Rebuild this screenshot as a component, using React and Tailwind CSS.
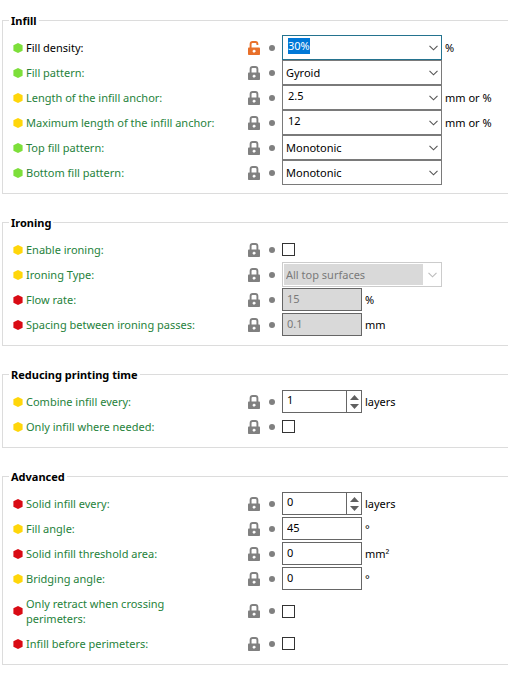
import { useEffect, useId, useRef } from "react";

const LEVEL_COLORS = {
  simple: "#7ddf3a",
  advanced: "#ffd60a",
  expert: "#d90b14",
};

function LevelMark({ level }) {
  return (
    <svg className="h-[10px] w-[10px] shrink-0" viewBox="0 0 10 10" aria-hidden="true">
      <path d="M5 0 L9.6 2.3 V7.7 L5 10 L0.4 7.7 V2.3 Z" fill={LEVEL_COLORS[level]} />
    </svg>
  );
}

function LockIcon({ open }) {
  return (
    <svg className="h-[14px] w-3" viewBox="0 0 12 14" aria-hidden="true">
      <path
        d={open ? "M2.6 7 V3 Q2.6 1 4.6 1 H7.4 Q9.4 1 9.4 3 V4" : "M2.6 7 V3 Q2.6 1 4.6 1 H7.4 Q9.4 1 9.4 3 V7"}
        fill="none"
        stroke={open ? "#e8702a" : "#808080"}
        strokeWidth="1.9"
      />
      <rect y="6.4" width="12" height="7.6" rx="0.8" fill={open ? "#e8702a" : "#808080"} />
      <path d="M4.4 10 L6 8.6 L8 10 L6.6 11.4 H5.2 Z" fill="#fff" />
    </svg>
  );
}

function Chevron({ color = "#555555" }) {
  return (
    <svg className="h-[6px] w-[9px]" viewBox="0 0 9 6" aria-hidden="true">
      <path d="M0.5 0.8 L4.5 4.8 L8.5 0.8" fill="none" stroke={color} strokeWidth="1.1" />
    </svg>
  );
}

function Row({ level, label, active, children }) {
  const id = useId();
  return (
    <div className="flex min-h-[25px] items-center">
      <LevelMark level={level} />
      <label
        htmlFor={id}
        className={`ml-[3px] w-[200px] shrink-0 py-[5px] leading-[15px] ${active ? "text-black" : "text-[#26823b]"}`}
      >
        {label}
      </label>
      <button type="button" aria-label={active ? "Unlocked value" : "Locked value"} className="ml-[22px] shrink-0">
        <LockIcon open={active} />
      </button>
      <button
        type="button"
        aria-label="Revert value"
        className="mr-[7px] ml-[9px] h-[6px] w-[6px] shrink-0 rounded-full bg-[#808080]"
      />
      {children(id)}
    </div>
  );
}

function Unit({ children }) {
  return <span className="ml-[3px] whitespace-nowrap text-black">{children}</span>;
}

function ComboInput({ id, value, focused }) {
  const ref = useRef(null);
  useEffect(() => {
    if (focused) {
      ref.current.focus();
      ref.current.select();
    }
  }, [focused]);
  return (
    <div
      className={`flex h-[25px] w-[160px] shrink-0 items-center border bg-white ${focused ? "border-[#24738f]" : "border-[#7a7a7a]"}`}
    >
      <input
        id={id}
        ref={ref}
        type="text"
        defaultValue={value}
        className="mb-[3px] ml-[5px] h-4 w-0 flex-1 leading-4 outline-none selection:bg-[#0078d7] selection:text-white"
      />
      <button type="button" aria-label="Show options" className="px-[3px]">
        <Chevron />
      </button>
    </div>
  );
}

function Select({ id, value, disabled }) {
  return (
    <div
      className={`grid h-[25px] w-[160px] shrink-0 grid-cols-[1fr_16px] items-center border bg-white ${disabled ? "border-[#cccccc] p-px" : "border-[#7a7a7a]"}`}
    >
      <select
        id={id}
        disabled={disabled}
        className={`col-span-2 col-start-1 row-start-1 h-full appearance-none outline-none ${disabled ? "mr-[17px] bg-[#d9d9d9] pl-[2px] text-[#7a7a7a] opacity-100" : "bg-white pl-[3px] text-black"}`}
      >
        <option>{value}</option>
      </select>
      <span className="pointer-events-none col-start-2 row-start-1 pl-1">
        <Chevron color={disabled ? "#bbbbbb" : "#555555"} />
      </span>
    </div>
  );
}

function TextField({ id, value, disabled }) {
  return (
    <input
      id={id}
      type="text"
      defaultValue={value}
      disabled={disabled}
      className={`h-[23px] w-[80px] shrink-0 border border-[#666666] pb-[3px] pl-1 outline-none ${disabled ? "bg-[#d9d9d9] text-[#7a7a7a]" : "bg-white text-black"}`}
    />
  );
}

function SpinField({ id, value }) {
  return (
    <div className="flex h-[23px] w-[80px] shrink-0 border border-[#666666] bg-white">
      <input id={id} type="text" inputMode="numeric" defaultValue={value} className="w-0 flex-1 pb-[3px] pl-1 outline-none" />
      <div className="flex w-[15px] flex-col items-center justify-center gap-1 border-l border-[#666666]">
        <button type="button" aria-label="Increase">
          <svg className="h-[5px] w-[9px]" viewBox="0 0 9 5" aria-hidden="true">
            <path d="M0 5 L4.5 0 L9 5 Z" fill="#606060" />
          </svg>
        </button>
        <button type="button" aria-label="Decrease">
          <svg className="h-[5px] w-[9px]" viewBox="0 0 9 5" aria-hidden="true">
            <path d="M0 0 L4.5 5 L9 0 Z" fill="#606060" />
          </svg>
        </button>
      </div>
    </div>
  );
}

function CheckField({ id }) {
  return <input id={id} type="checkbox" className="h-[13px] w-[13px] shrink-0 appearance-none border border-[#333333] bg-white checked:bg-[#333333]" />;
}

function Field({ id, row }) {
  switch (row.type) {
    case "combo":
      return <ComboInput id={id} value={row.value} focused={row.active} />;
    case "select":
      return <Select id={id} value={row.value} disabled={row.disabled} />;
    case "spin":
      return <SpinField id={id} value={row.value} />;
    case "check":
      return <CheckField id={id} />;
    default:
      return <TextField id={id} value={row.value} disabled={row.disabled} />;
  }
}

const GROUPS = [
  {
    title: "Infill",
    rows: [
      { level: "simple", label: "Fill density:", type: "combo", value: "30%", unit: "%", active: true },
      { level: "simple", label: "Fill pattern:", type: "select", value: "Gyroid" },
      { level: "advanced", label: "Length of the infill anchor:", type: "combo", value: "2.5", unit: "mm or %" },
      { level: "advanced", label: "Maximum length of the infill anchor:", type: "combo", value: "12", unit: "mm or %" },
      { level: "simple", label: "Top fill pattern:", type: "select", value: "Monotonic" },
      { level: "simple", label: "Bottom fill pattern:", type: "select", value: "Monotonic" },
    ],
  },
  {
    title: "Ironing",
    rows: [
      { level: "advanced", label: "Enable ironing:", type: "check" },
      { level: "advanced", label: "Ironing Type:", type: "select", value: "All top surfaces", disabled: true },
      { level: "expert", label: "Flow rate:", type: "text", value: "15", unit: "%", disabled: true },
      { level: "expert", label: "Spacing between ironing passes:", type: "text", value: "0.1", unit: "mm", disabled: true },
    ],
  },
  {
    title: "Reducing printing time",
    rows: [
      { level: "advanced", label: "Combine infill every:", type: "spin", value: "1", unit: "layers" },
      { level: "advanced", label: "Only infill where needed:", type: "check" },
    ],
  },
  {
    title: "Advanced",
    rows: [
      { level: "expert", label: "Solid infill every:", type: "spin", value: "0", unit: "layers" },
      { level: "advanced", label: "Fill angle:", type: "text", value: "45", unit: "°" },
      { level: "expert", label: "Solid infill threshold area:", type: "text", value: "0", unit: "mm²" },
      { level: "advanced", label: "Bridging angle:", type: "text", value: "0", unit: "°" },
      { level: "expert", label: "Only retract when crossing perimeters:", type: "check" },
      { level: "expert", label: "Infill before perimeters:", type: "check" },
    ],
  },
];

export default function App() {
  return (
    <form className="flex min-h-screen flex-col gap-5 bg-white pt-3 pb-3 pl-[2px] font-['Noto_Sans','Open_Sans',sans-serif] text-[11px] leading-4 text-black">
      {GROUPS.map((group) => (
        <fieldset key={group.title} className="min-w-0 border border-r-0 border-[#dcdcdc] pt-[6px] pb-2 pl-[10px]">
          <legend className="-ml-1 px-[2px] leading-[17px] font-bold">{group.title}</legend>
          {group.rows.map((row) => (
            <Row key={row.label} level={row.level} label={row.label} active={row.active}>
              {(id) => (
                <>
                  <Field id={id} row={row} />
                  {row.unit && <Unit>{row.unit}</Unit>}
                </>
              )}
            </Row>
          ))}
        </fieldset>
      ))}
    </form>
  );
}
